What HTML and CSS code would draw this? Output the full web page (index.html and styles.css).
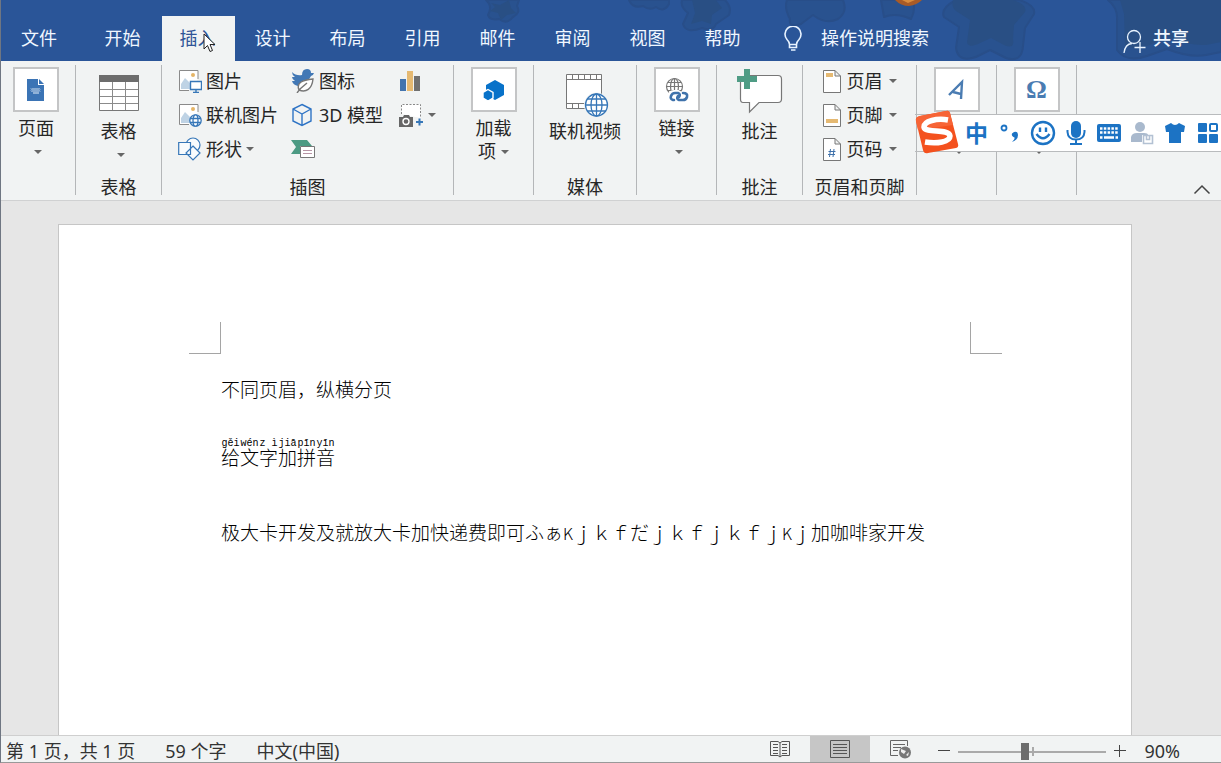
FILE: index.html
```html
<!DOCTYPE html>
<html lang="zh-CN">
<head>
<meta charset="utf-8">
<title>文档</title>
<link rel="stylesheet" href="styles.css">
</head>
<body>
<div class="app">
  <header class="titlebar">
    <svg class="titlebar-art" width="740" height="61" viewBox="481 0 740 61" aria-hidden="true">
      <g fill="#29528f" stroke="#284e89" stroke-width="2" stroke-linejoin="round">
        <path d="M486 0Q493 6 488 15Q490 21 499 19Q507 25 513 17Q521 13 517 6L519 0Z"/>
        <path d="M629 0Q633 9 643 6Q650 11 656 7Q664 13 669 4L669 0Z"/>
        <path d="M682 0Q680 7 688 13L683 24Q686 34 702 28Q713 32 716 24L729 15Q732 7 725 0Z"/>
        <path d="M787 0Q784 8 790 19Q788 28 801 24L813 15Q826 25 838 19Q848 12 843 0Z"/>
        <path d="M881 0L884 17Q896 12 911 19Q916 10 913 0Z"/>
        <path d="M956 0Q940 8 944 17L959 27L956 48Q958 63 976 57L990 50L1006 58Q1022 63 1023 46L1025 28L1034 14Q1036 5 1019 0Z"/>
        <path d="M1108 0Q1118 8 1117 20L1117 50Q1126 63 1147 56L1167 49Q1190 58 1206 55L1221 52V0Z"/>
      </g>
      <g fill="#294f84">
        <path d="M491 3L500 5L509 0L511 8L516 13L507 15L501 20L498 13L490 11L495 7Z"/>
        <path d="M692 0L695 13L691 24L702 21L711 24L712 15L722 8L716 0Z"/>
        <path d="M953 0Q951 7 956 11L970 20L967 42Q968 49 980 43L991 38L1004 45Q1015 50 1013 39L1014 25L1025 12Q1028 5 1013 0"/>
        <path d="M1120 0L1124 14L1125 45Q1134 51 1147 46L1167 37Q1190 46 1206 45L1221 42V0Z"/>
      </g>
      <path d="M895 0Q901 6 909 6Q917 5 922 0Z" fill="#a85b27"/>
      <path d="M902 0L908 3L915 0Z" fill="#d98c3d"/>
    </svg>
    <nav class="tabs">
      <button class="tab tab-file">文件</button>
      <button class="tab">开始</button>
      <button class="tab tab-active">插入
        <svg class="cursor" width="14" height="20" viewBox="0 0 14 20" aria-hidden="true"><path d="M1 1V16L4.500 12.500L7 18.500L9.500 17.500L7 11.500H12Z" fill="#fff" stroke="#222" stroke-linejoin="round"/></svg>
      </button>
      <button class="tab">设计</button>
      <button class="tab">布局</button>
      <button class="tab">引用</button>
      <button class="tab">邮件</button>
      <button class="tab">审阅</button>
      <button class="tab">视图</button>
      <button class="tab">帮助</button>
    </nav>
    <button class="tell-me">
      <svg width="20" height="26" viewBox="0 0 20 26" fill="none" stroke="#e8f3ff" stroke-width="1.600"><path d="M6.500 18.500Q6.500 16 4 13.500A8 8 0 1 1 16 13.500Q13.500 16 13.500 18.500ZM6.500 18.500V21.500H13.500V18.500M8 24H12.500"/></svg>
      操作说明搜索
    </button>
    <button class="share">
      <svg width="24" height="26" viewBox="0 0 24 26" fill="none" stroke="#e8f3ff" stroke-width="1.300"><circle cx="11" cy="9" r="6.500"/><path d="M1 25Q2 16 9 15.500M17 14V25M11.500 19.500H22.500"/></svg>
      共享
    </button>
  </header>

  <section class="ribbon" aria-label="插入">
    <div class="group group-pages">
      <button class="big">
        <span class="tile"><svg width="18" height="24" viewBox="0 0 18 24"><path d="M0 1H11V7H17V23H0Z" fill="#3b74b5"/><path d="M12 1L17 6H12Z" fill="#3b74b5"/><path d="M4 10.500l1 1 1-1 1 1 1-1 1 1 1-1 1 1 1-1 1 1M4 12.500l1 1 1-1 1 1 1-1 1 1 1-1 1 1 1-1 1 1M6 15H12" stroke="#e6f0fa" fill="none"/></svg></span>
        <span>页面</span><i class="caret"></i>
      </button>
    </div>
    <div class="group group-table">
      <button class="big">
        <span class="picture"><svg width="40" height="36" viewBox="0 0 40 36"><path d="M.5 .5H39.500V35.500H.5Z" fill="#fff" stroke="#777"/><path d="M0 0H40V7H0Z" fill="#6d6d6d"/><path d="M1 14.500H39M1 21.500H39M1 28.500H39M13.500 7V35M26.500 7V35" stroke="#8b8b8b"/></svg></span>
        <span>表格</span><i class="caret"></i>
      </button>
      <h2 class="group-name">表格</h2>
    </div>
    <div class="group group-art">
      <div class="art-grid">
        <button class="row"><svg width="24" height="24" viewBox="0 0 24 24"><path d="M20 10V1.500H1.500V21.500H11" fill="#fff" stroke="#8a8a8a"/><path d="M3 20V15L7 9L13 15V20Z" fill="#bfd3e5"/><circle cx="15" cy="6" r="2" fill="#e5b567"/><path d="M12.500 12.500H23.500V20.500H12.500ZM18 21V23M15 23.500H21" fill="#fff" stroke="#3777b8" stroke-width="1.400"/></svg>图片</button>
        <button class="row"><svg width="24" height="24" viewBox="0 0 24 24"><path d="M1 3Q5 7 11 6Q11 0 16 0Q20 0 20 4L23 4Q22 7 20 7Q19 10 16 11Q10 11 7 17Q2 16 1 12L4 12Q1 10 1 8L4 8Q1 6 1 3Z" fill="#4278b5"/><path d="M8 21C5 14 11 11 22 10C21 20 15 24 8 21ZM6 24L9 20L16 14" fill="#fff" stroke="#777" stroke-width="1.400"/></svg>图标</button>
        <button class="row" aria-label="图表"><svg width="24" height="24" viewBox="0 0 24 24"><path d="M2 10H8V22H2Z" fill="#4374ae"/><path d="M9 2H15V22H9Z" fill="#e5b972"/><path d="M16 7H22V22H16Z" fill="#707070"/></svg></button>
        <button class="row"><svg width="24" height="24" viewBox="0 0 24 24"><path d="M20 9V1.500H1.500V21.500H11" fill="#fff" stroke="#8a8a8a"/><path d="M3 20V15L7 9L13 15V20Z" fill="#bfd3e5"/><circle cx="15" cy="6" r="2" fill="#e5b567"/><g fill="#fff" stroke="#3777b8" stroke-width="1.300"><circle cx="17.500" cy="17.500" r="5.700"/><ellipse cx="17.500" cy="17.500" rx="2.500" ry="5.700"/><path d="M12 15.500H23M12 19.500H23"/></g></svg>联机图片</button>
        <button class="row"><svg width="24" height="24" viewBox="0 0 24 24" fill="none" stroke="#2f74c5" stroke-width="1.400"><path d="M11 1.500L20 6V18L11 22.500L2 18V6ZM2 6L11 11L20 6M11 11V22"/></svg>3D 模型</button>
        <button class="row" aria-label="屏幕截图"><svg width="26" height="26" viewBox="0 0 26 26"><path d="M3.500 12V2.500H22.500V16" fill="#fff" stroke="#888" stroke-dasharray="2 1.500"/><path d="M1 15H5L6 13H11L12 15H15V25H1Z" fill="#666"/><circle cx="8" cy="19.500" r="3" fill="#666" stroke="#fff" stroke-width="1.400"/><path d="M18 20H25M21.500 16.500V23.500" stroke="#3777b8" stroke-width="2"/></svg><i class="caret"></i></button>
        <button class="row"><svg width="24" height="24" viewBox="0 0 24 24" fill="#f8fbfd" stroke="#3777b8" stroke-width="1.200"><circle cx="15" cy="8" r="7"/><path d="M.7 5.500H12.500V17.500H.7ZM15 9L22 16L15 23L8 16Z"/></svg>形状<i class="caret"></i></button>
        <button class="row" aria-label="SmartArt"><svg width="24" height="24" viewBox="0 0 24 24"><path d="M0 3H16L21 9H9V17H0L5 10Z" fill="#4c9a83"/><path d="M9.500 9.500H23.500V20.500H9.500Z" fill="#fff" stroke="#777"/><path d="M12 13.500H21M12 16.500H21" stroke="#b795a5"/></svg></button>
      </div>
      <h2 class="group-name">插图</h2>
    </div>
    <div class="group group-addins">
      <button class="big">
        <span class="tile"><svg width="24" height="24" viewBox="0 0 24 24" fill="#0872c9"><path d="M13 2L22 7V17L13 22L4 17V7Z"/><path d="M6 11.500L11 14.500V20L6 23L1 20V14.500Z" stroke="#fff" stroke-width="1.400"/></svg></span>
        <span>加载</span><span class="with-caret">项<i class="caret"></i></span>
      </button>
    </div>
    <div class="group group-media">
      <button class="big">
        <span class="picture"><svg width="48" height="48" viewBox="-4 -4 48 48"><path d="M1.500 1.500H36.500V35.500H1.500Z" fill="#fff" stroke="#777"/><path d="M1 6.500H37M1 30.500H37M7.500 1V6M13.500 1V6M19.500 1V6M25.500 1V6M31.500 1V6M7.500 31V35M13.500 31V35" stroke="#777"/><circle cx="31.500" cy="32" r="12.500" fill="#f1f3f3"/><g fill="#fff" stroke="#3777b8" stroke-width="1.300"><circle cx="31.500" cy="32" r="11"/><ellipse cx="31.500" cy="32" rx="5.500" ry="11" fill="none"/><path d="M31.500 21V43M20.500 32H42.500M22.500 26H40.500M22.500 38H40.500"/></g></svg></span>
        <span>联机视频</span>
      </button>
      <h2 class="group-name">媒体</h2>
    </div>
    <div class="group group-links">
      <button class="big">
        <span class="tile"><svg width="24" height="26" viewBox="0 0 24 26"><g fill="none" stroke="#777" stroke-width="1.200"><circle cx="9.500" cy="9.500" r="8"/><ellipse cx="9.500" cy="9.500" rx="4" ry="8"/><path d="M9.500 1.500V17M1.500 9.500H17.500M3 5.500H16M3 13.500H16"/></g><g fill="none" stroke="#fff" stroke-width="6"><path d="M6 19Q6 16 9 16H13Q16 17 14 21M21 18Q23 23 18 23H13Q10 22 13 18"/></g><g fill="none" stroke="#3f72ab" stroke-width="2.600" stroke-linecap="round"><path d="M9 23H8Q5 22 6 19Q7 16 10 16H13Q16 17 14 20M18 16Q23 16 22 20Q21 23 18 23H14Q11 22 13 19"/></g></svg></span>
        <span>链接</span><i class="caret"></i>
      </button>
    </div>
    <div class="group group-comment">
      <button class="big">
        <span class="picture"><svg width="46" height="48" viewBox="0 0 46 48"><path d="M8 6.500H41Q44.500 6.500 44.500 10V30Q44.500 33.500 41 33.500H22L12.500 43V33.500H6Q3.500 33.500 3.500 30V12" fill="#fff" stroke="#777" stroke-width="1.200"/><path d="M7 0H13V7H20V13H13V20H7V13H0V7H7Z" fill="#4f9c85"/></svg></span>
        <span>批注</span>
      </button>
      <h2 class="group-name">批注</h2>
    </div>
    <div class="group group-header">
      <div class="header-list">
        <button class="row"><svg width="18" height="23" viewBox="0 0 18 23"><path d="M.5 .5H12L17.500 6V22.500H.5ZM12 .5V6H17.500" fill="#fff" stroke="#777"/><path d="M3 3H10V7H3Z" fill="#e5b972"/></svg>页眉<i class="caret"></i></button>
        <button class="row"><svg width="18" height="23" viewBox="0 0 18 23"><path d="M.5 .5H12L17.500 6V22.500H.5ZM12 .5V6H17.500" fill="#fff" stroke="#777"/><path d="M3 15H15V19H3Z" fill="#e5b972"/></svg>页脚<i class="caret"></i></button>
        <button class="row"><svg width="18" height="23" viewBox="0 0 18 23"><path d="M.5 .5H12L17.500 6V22.500H.5ZM12 .5V6H17.500" fill="#fff" stroke="#777"/><path d="M7.500 11L6.500 19M11 11L10 19M5.500 13.500H12.500M5 16.500H12" stroke="#3f72ab" fill="none"/></svg>页码<i class="caret"></i></button>
      </div>
      <h2 class="group-name">页眉和页脚</h2>
    </div>
    <div class="group group-text">
      <button class="big" aria-label="文本"><span class="tile"><svg width="20" height="22" viewBox="0 0 20 22" fill="none" stroke="#4a7cb2" stroke-width="2.400"><path d="M2 16L15 3L14 20M6 13L14 15"/></svg></span><span class="blank"></span><i class="caret"></i></button>
    </div>
    <div class="group group-symbol">
      <button class="big" aria-label="符号"><span class="tile glyph-omega">Ω</span><span class="blank"></span><i class="caret"></i></button>
    </div>
    <button class="collapse" aria-label="折叠功能区"><svg width="18" height="11" viewBox="0 0 18 11" fill="none" stroke="#444" stroke-width="1.500"><path d="M1.500 9.500L9 2L16.500 9.500"/></svg></button>

    <div class="ime">
      <svg class="ime-logo" width="44" height="44" viewBox="0 0 44 44"><path d="M5 6L31 1Q34 0 35 3L43 34Q44 37 41 38L13 43Q9 44 8 40L1 11Q0 7 5 6Z" fill="#f4511e"/><path d="M5 6L31 1Q34 0 35 3L38 15L3 20L1 11Q0 7 5 6Z" fill="#f76436"/><path d="M33 10C22 8 9 11 9 17C10 24 34 18 35 26C35 32 22 34 10 32" fill="none" stroke="#fff" stroke-width="5.500"/></svg>
      <button class="ime-key ime-lang">中</button>
      <button class="ime-key" aria-label="标点"><svg width="20" height="20" viewBox="0 0 20 20"><circle cx="4" cy="5" r="2.500" fill="none" stroke="#1c73c4" stroke-width="1.800"/><path d="M14 9Q18 8 18 12Q18 17 12 19Q15 16 14.500 14.500Q11 13 12 10.500Z" fill="#1c73c4"/></svg></button>
      <button class="ime-key" aria-label="表情"><svg width="26" height="26" viewBox="0 0 26 26" fill="none" stroke="#1c73c4" stroke-width="2.400"><circle cx="13" cy="13" r="11"/><path d="M10 7.500V12M16 7.500V12M6.500 14Q13 22.500 19.500 14"/></svg></button>
      <button class="ime-key" aria-label="语音"><svg width="20" height="26" viewBox="0 0 20 26"><rect x="5" y="1" width="10" height="17" rx="5" fill="#1c73c4"/><path d="M1.500 10V12Q2 19.500 10 19.500Q18 19.500 18.500 12V10M10 19V24M4 24H16" fill="none" stroke="#1c73c4" stroke-width="2"/></svg></button>
      <button class="ime-key" aria-label="键盘"><svg width="26" height="20" viewBox="0 0 26 20"><rect x="1" y="1" width="24" height="18" rx="2" fill="#1c73c4"/><path d="M4 5.500H22M4 9.500H22" stroke="#fff" stroke-width="2.400" stroke-dasharray="2.500 1.300"/><path d="M4 14.500H6.500M8 14.500H18M19.500 14.500H22" stroke="#fff" stroke-width="2.400"/></svg></button>
      <button class="ime-key" aria-label="账户"><svg width="24" height="24" viewBox="0 0 24 24"><circle cx="10" cy="6" r="5" fill="#a9b9cd"/><path d="M1 21V16Q2 12 7 12H14Q18 12 18 14H12V21Z" fill="#a9b9cd"/><path d="M13.500 14.500H22.500V22.500H13.500ZM16.500 15V18.500H19.500V15" fill="#fff" stroke="#b3c1d3" stroke-width="1.600"/></svg></button>
      <button class="ime-key" aria-label="皮肤"><svg width="22" height="22" viewBox="0 0 22 22"><path d="M7 1Q11 5 15 1L21 4L20 10H17V21H5V10H2L1 4Z" fill="#1c73c4"/></svg></button>
      <button class="ime-key" aria-label="工具箱"><svg width="22" height="22" viewBox="0 0 22 22" fill="#1c73c4"><rect x="1" y="1" width="9" height="9" rx="1"/><rect x="13" y="2" width="7" height="7" rx="1" fill="#fff" stroke="#1c73c4" stroke-width="2"/><rect x="1" y="12" width="9" height="9" rx="1"/><rect x="12" y="12" width="9" height="9" rx="1"/></svg></button>
    </div>
  </section>

  <main class="workspace">
    <article class="page">
      <div class="marks"><span class="mark mark-left"></span><span class="mark mark-right"></span></div>
      <div class="body-text">
        <p>不同页眉，纵横分页</p>
        <p class="phonetic"><ruby>给<rt>gěi</rt></ruby><ruby>文<rt>wén</rt></ruby><ruby>字<rt>z ì</rt></ruby><ruby>加<rt>jiā</rt></ruby><ruby>拼<rt>pīn</rt></ruby><ruby>音<rt>yīn</rt></ruby></p>
        <p class="mixed">极大卡开发及就放大卡加快递费即可ふぁ<span class="half">K</span>ｊｋｆだｊｋｆｊｋｆｊ<span class="half">K</span>ｊ加咖啡家开发</p>
      </div>
    </article>
  </main>

  <footer class="status">
    <div class="status-info"><span>第 1 页，共 1 页</span><span>59 个字</span><span>中文(中国)</span></div>
    <div class="views">
      <button class="view" aria-label="阅读视图"><svg width="20" height="18" viewBox="0 0 20 18" fill="none" stroke="#555"><path d="M.5 1.500H8L10 3L12 1.500H19.500V15.500H12L10 17L8 15.500H.5ZM10 3V17M3 4.500H8M3 7.500H8M3 10.500H8M3 13.500H8M12 4.500H17M12 7.500H17M12 10.500H17M12 13.500H17"/></svg></button>
      <button class="view view-active" aria-label="页面视图"><svg width="20" height="18" viewBox="0 0 20 18" fill="none" stroke="#555"><path d="M.5 .5H19.500V17.500H.5ZM3 4.500H17M3 7.500H17M3 10.500H17M3 13.500H17"/></svg></button>
      <button class="view" aria-label="Web 版式视图"><svg width="21" height="20" viewBox="0 0 21 20"><path d="M17.500 7V1.500H.5V16.500H8M3 5.500H15M3 8.500H11M3 11.500H8" fill="none" stroke="#666"/><circle cx="15" cy="13.500" r="6" fill="#777"/><path d="M11 10L16 12L14 15L11 13ZM16 16L19 13L18 17Z" fill="#eee"/></svg></button>
    </div>
    <div class="zoom">
      <button class="step" aria-label="缩小"><svg width="14" height="14" viewBox="0 0 14 14"><path d="M1 6.500H13" stroke="#444"/></svg></button>
      <input class="slider" type="range" min="0" max="100" value="45" aria-label="显示比例">
      <button class="step" aria-label="放大"><svg width="14" height="14" viewBox="0 0 14 14"><path d="M1 6.500H13M6.500 1V13" stroke="#444"/></svg></button>
      <button class="percent">90%</button>
    </div>
  </footer>
</div>
</body>
</html>
```
FILE: styles.css
```css
* { box-sizing: border-box; }

body {
  margin: 0;
  font: 18px/23px "Noto Sans", "Noto Sans CJK SC", sans-serif;
  color: #262626;
}

button {
  font: inherit;
  color: inherit;
  background: none;
  border: 0;
  padding: 0;
}

svg { display: block; flex: none; }

.app {
  display: flex;
  flex-direction: column;
  height: 100vh;
  overflow: hidden;
  border-left: 1px solid #6f7682;
  border-bottom: 1px solid #999;
  background: #e6e6e6;
}

/* title bar and tabs */
.titlebar {
  position: relative;
  display: flex;
  align-items: flex-end;
  flex: none;
  height: 61px;
  padding-right: 32px;
  background: #2a5598;
  color: #f0f7ff;
}

.titlebar-art { position: absolute; top: 0; right: 0; }

.tabs { position: relative; display: flex; gap: 2px; }

.tab { position: relative; width: 73px; height: 45px; padding: 0 2px 1px 0; }
.tab-file { width: 78px; margin-right: 6px; }
.tab-active { background: #f1f3f3; color: #2f5597; }
.cursor { position: absolute; left: 41px; top: 17px; }

.tell-me, .share {
  position: relative;
  display: flex;
  align-items: center;
  height: 45px;
}
.tell-me { gap: 18px; margin-left: 23px; }
.share { gap: 6px; margin-left: auto; font-weight: 500; }
.share svg { margin-top: 5px; }

/* ribbon */
.ribbon {
  position: relative;
  display: flex;
  flex: none;
  padding: 4px 0 5px;
  background: #f1f3f3;
  border-bottom: 1px solid #d0d1d2;
}

.group {
  display: flex;
  flex-direction: column;
  align-items: center;
  flex: none;
  height: 130px;
  border-right: 1px solid #b4b6b8;
}
.group-pages { width: 75px; padding-right: 4px; }
.group-table, .group-comment { width: 86px; }
.group-art { width: 292px; }
.group-addins, .group-links, .group-text, .group-symbol { width: 80px; }
.group-media { width: 103px; }
.group-header { width: 114px; }

.group-name {
  margin: auto 0 0;
  font-size: 18px;
  line-height: 16px;
  font-weight: 400;
}

.big {
  display: flex;
  flex-direction: column;
  align-items: center;
}

.tile {
  display: flex;
  align-items: center;
  justify-content: center;
  width: 46px;
  height: 45px;
  margin: 2px 0 5px;
  background: #fff;
  border: 2px solid #c4c5c6;
}
.glyph-omega { font: bold 26px "Liberation Serif", serif; color: #4a7cb2; }

.picture {
  display: flex;
  align-items: center;
  height: 55px;
}
.blank { height: 23px; }

.caret {
  flex: none;
  border: 4px solid transparent;
  border-top-color: #666;
  border-bottom: 0;
}
.big > .caret { margin: 10px 0 0 4px; }
.with-caret { display: flex; align-items: center; gap: 5px; }

.row {
  display: flex;
  align-items: center;
  gap: 4px;
  height: 34px;
  padding-bottom: 2px;
  white-space: nowrap;
}

.art-grid {
  display: grid;
  grid-template-columns: 113px 107px 1fr;
  align-self: stretch;
  padding-left: 16px;
}

.header-list .row { gap: 6px; }

.collapse { margin: auto 10px 0 auto; }

/* floating input-method bar */
.ime {
  position: absolute;
  top: 53px;
  right: -3px;
  display: flex;
  height: 38px;
  padding-left: 45px;
  border: 1px solid #b9bbbd;
  border-right: 0;
  background: linear-gradient(to right, transparent 20px, #fff 20px);
  border-left: 0;
}
.ime-logo { position: absolute; left: 0; top: -5px; }
.ime-key {
  display: flex;
  align-items: center;
  justify-content: center;
  width: 33px;
}
.ime-lang { color: #1c73c4; font-size: 23px; font-weight: 700; }

/* document */
.workspace {
  display: flex;
  flex: 1;
  min-height: 0;
  padding: 23px 89px 0 57px;
}

.page {
  flex: 1;
  padding: 97px 129px 0 130px;
  background: #fff;
  border: 1px solid #c6c6c6;
  border-bottom: 0;
}

.marks { display: flex; justify-content: space-between; }
.mark { width: 32px; height: 32px; border-bottom: 1px solid #a5a5a5; }
.mark-left { border-right: 1px solid #a5a5a5; }
.mark-right { border-left: 1px solid #a5a5a5; }

.body-text {
  padding: 16px 32px 0;
  font: 300 19px/38px "Noto Sans CJK SC", sans-serif;
  color: #000;
}
.body-text p { margin: 0; }
.body-text .phonetic { display: flex; margin: 29px 0 38px; height: 38px; }
.body-text .mixed { white-space: nowrap; }

ruby { display: flex; flex-direction: column-reverse; justify-content: flex-end; width: 19px; line-height: 18px; }
rt {
  display: block;
  padding-top: 3px;
  font: 10px/8px "Liberation Mono", monospace;
  text-align: center;
  white-space: nowrap;
}
.half { font-size: 16px; }

/* status bar */
.status {
  display: flex;
  flex: none;
  height: 27px;
  background: #f1f3f3;
  border-top: 1px solid #cfcfcf;
}
.status-info {
  display: flex;
  align-items: center;
  gap: 30px;
  padding: 4px 0 0 5px;
  color: #333;
}
.views { display: flex; margin-left: auto; }
.view {
  display: flex;
  align-items: center;
  justify-content: center;
  width: 60px;
}
.view-active { background: #c6c6c6; }
.zoom {
  display: flex;
  align-items: center;
  gap: 7px;
  padding: 4px 41px 0 7px;
  color: #333;
}
.percent { margin-left: 10px; }

.slider {
  appearance: none;
  width: 148px;
  height: 17px;
  margin: 0;
  background: linear-gradient(#aaa, #aaa) 74px 4px / 2px 9px no-repeat,
    linear-gradient(#aaa, #aaa) 0 8px / 100% 2px no-repeat;
}
.slider::-webkit-slider-thumb {
  appearance: none;
  width: 8px;
  height: 17px;
  background: #6d6d6d;
}
```
